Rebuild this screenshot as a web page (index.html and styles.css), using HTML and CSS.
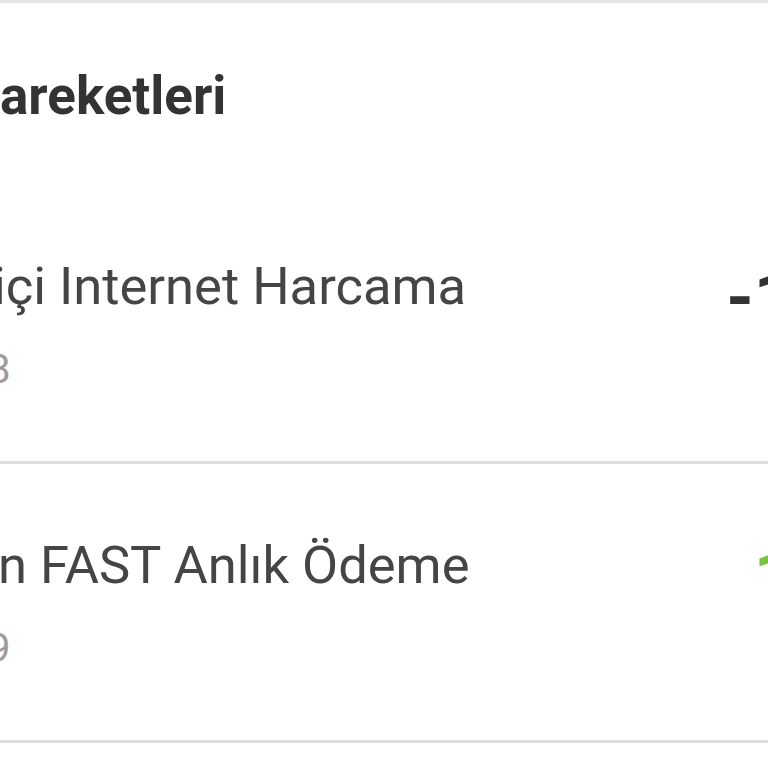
FILE: index.html
```html
<!DOCTYPE html>
<html lang="tr">
<head>
<meta charset="utf-8">
<title>Hesap Hareketleri</title>
<link rel="stylesheet" href="styles.css">
</head>
<body>
<main class="screen">
  <header class="header">
    <h1 class="title">areketleri</h1>
  </header>
  <section class="list">
    <div class="row">
      <div class="info">
        <div class="name name-1">içi Internet Harcama</div>
        <div class="date">8</div>
      </div>
      <div class="amount amount-out">-1</div>
    </div>
    <div class="row">
      <div class="info">
        <div class="name name-2">n FAST Anlık Ödeme</div>
        <div class="date">9</div>
      </div>
      <div class="amount amount-in">1</div>
    </div>
  </section>
</main>
</body>
</html>
```

FILE: styles.css
```css
* {
  box-sizing: border-box;
  margin: 0;
  padding: 0;
}

html, body {
  width: 768px;
  height: 768px;
  overflow: hidden;
  background: #ffffff;
}

body {
  font-family: Roboto, "Noto Sans", "Liberation Sans", sans-serif;
}

.screen {
  width: 768px;
  height: 768px;
  overflow: hidden;
  border-top: 3px solid #e4e4e4;
  display: flex;
  flex-direction: column;
}

.header {
  height: 182px;
  padding-top: 61px;
  flex: none;
}

.title {
  font-size: 53px;
  font-weight: 700;
  line-height: 64px;
  color: #333333;
  margin-left: 0;
  white-space: nowrap;
}

.list {
  display: flex;
  flex-direction: column;
}

.row {
  height: 279px;
  padding-top: 69px;
  border-bottom: 3px solid #dedede;
  display: flex;
  justify-content: space-between;
  align-items: flex-start;
  flex: none;
}

.info {
  display: flex;
  flex-direction: column;
  gap: 28px;
}

.name {
  font-size: 52.5px;
  line-height: 64px;
  color: #454545;
  white-space: nowrap;
}

.name-1 {
  margin-left: -7px;
}

.name-2 {
  margin-left: -2px;
}

.date {
  font-size: 40px;
  line-height: 48px;
  color: #9c9c9c;
  margin-left: -12px;
}

.amount {
  font-size: 70px;
  font-weight: 700;
  line-height: 64px;
  margin-top: 12px;
  margin-right: -26px;
  white-space: nowrap;
}

.amount-out {
  color: #333333;
}

.amount-in {
  color: #7cc242;
}
```
